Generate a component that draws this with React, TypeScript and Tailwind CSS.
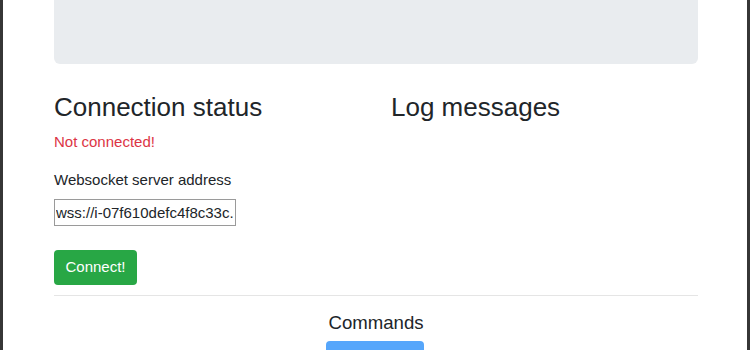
export default function App() {
  return (
    <div className="h-[350px] w-[750px] overflow-hidden border-x-[3px] border-[#363636] bg-white font-['Liberation_Sans',Arial,sans-serif] text-[15px] leading-[1.5] text-[#212529]">
      <div className="pl-[51px] pr-[49px]">
        <div className="h-[64px] rounded-b-[6px] bg-[#e9ecef]" />

        <div className="mt-[28px] grid grid-cols-2 gap-x-[30px]">
          <div className="flex flex-col items-start">
            <h3 className="mb-[7.5px] text-[26px] font-medium leading-[1.2]">Connection status</h3>
            <p className="mb-[16px] text-[#dc3545]">Not connected!</p>
            <label className="mb-[7.5px]">Websocket server address</label>
            <input
              className="h-[27px] w-[182px] border border-[#9a9a9a] px-[1px] text-[15px] text-[#212529] outline-none"
              defaultValue="wss://i-07f610defc4f8c33c.robotics.example.com:9090"
            />
            <button className="mt-[24px] w-[83px] rounded-[4px] bg-[#28a745] py-[6px] text-center text-white">Connect!</button>
          </div>
          <div>
            <h3 className="text-[26px] font-medium leading-[1.2]">Log messages</h3>
          </div>
        </div>

        <hr className="mt-[10px] border-t border-[#e5e5e5]" />

        <div className="mt-[16px] flex flex-col items-center">
          <h5 className="mb-[7px] text-[18.6px] font-medium leading-[1.2]">Commands</h5>
          <button aria-label="Forward" className="mr-[3px] h-[40px] w-[98px] rounded-[4px] bg-[#56a6fb]" />
        </div>
      </div>
    </div>
  );
}
